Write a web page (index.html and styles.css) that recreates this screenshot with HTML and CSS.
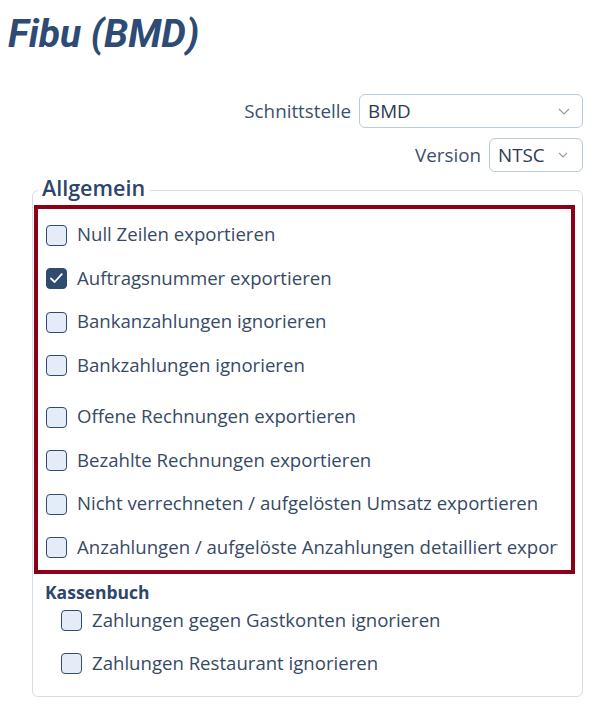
FILE: index.html
```html
<!DOCTYPE html>
<html lang="de">
<head>
<meta charset="utf-8">
<title>Fibu (BMD)</title>
<link rel="stylesheet" href="styles.css">
</head>
<body>
<div class="page">
  <h1 class="title">Fibu (BMD)</h1>

  <div class="settings">
    <div class="field-row">
      <label class="field-label">Schnittstelle</label>
      <div class="select select-wide">
        <span class="select-value">BMD</span>
        <svg class="chevron chevron-wide" viewBox="0 0 12 7" width="12" height="7"><path d="M1 1 L6 6 L11 1"/></svg>
      </div>
    </div>
    <div class="field-row">
      <label class="field-label">Version</label>
      <div class="select select-narrow">
        <span class="select-value">NTSC</span>
        <svg class="chevron chevron-narrow" viewBox="0 0 10 6" width="10" height="6"><path d="M1 1 L5 5 L9 1"/></svg>
      </div>
    </div>
  </div>

  <fieldset class="group">
    <legend class="group-title">Allgemein</legend>
    <div class="highlight">
      <div class="check-row"><span class="box"></span><span class="check-text">Null Zeilen exportieren</span></div>
      <div class="check-row"><span class="box checked"><svg viewBox="0 0 21 21" width="21" height="21"><path d="M5 10.5 L8.6 14 L15.8 6.2"/></svg></span><span class="check-text">Auftragsnummer exportieren</span></div>
      <div class="check-row"><span class="box"></span><span class="check-text">Bankanzahlungen ignorieren</span></div>
      <div class="check-row"><span class="box"></span><span class="check-text">Bankzahlungen ignorieren</span></div>
      <div class="check-row row-sep"><span class="box"></span><span class="check-text">Offene Rechnungen exportieren</span></div>
      <div class="check-row"><span class="box"></span><span class="check-text">Bezahlte Rechnungen exportieren</span></div>
      <div class="check-row"><span class="box"></span><span class="check-text">Nicht verrechneten / aufgelösten Umsatz exportieren</span></div>
      <div class="check-row"><span class="box"></span><span class="check-text">Anzahlungen / aufgelöste Anzahlungen detailliert exportieren</span></div>
    </div>
    <div class="subhead">Kassenbuch</div>
    <div class="sub-list">
      <div class="check-row sub-row"><span class="box"></span><span class="check-text">Zahlungen gegen Gastkonten ignorieren</span></div>
      <div class="check-row sub-row"><span class="box"></span><span class="check-text">Zahlungen Restaurant ignorieren</span></div>
    </div>
  </fieldset>
</div>
</body>
</html>
```

FILE: styles.css
```css
* {
  box-sizing: border-box;
}

body {
  margin: 0;
  background: #ffffff;
  font-family: "Open Sans", "Liberation Sans", sans-serif;
  font-size: 18.6px;
  color: #364a66;
}

.page {
  padding: 0 17px 0 8px;
}

.title {
  margin: 0;
  padding-top: 12px;
  font-family: Roboto, "Liberation Sans", sans-serif;
  font-style: italic;
  font-weight: 700;
  font-size: 39px;
  line-height: 44px;
  color: #2d4b74;
}

.settings {
  margin-top: 38px;
  display: flex;
  flex-direction: column;
  align-items: flex-end;
  gap: 10px;
}

.field-row {
  display: flex;
  align-items: center;
  gap: 8px;
}

.field-label {
  font-size: 18.8px;
  color: #3b4f6a;
}

.select {
  height: 34px;
  border: 1px solid #b8cae2;
  border-radius: 6px;
  background: #ffffff;
  display: flex;
  align-items: center;
  justify-content: space-between;
  padding-left: 8px;
}

.select-wide {
  width: 224px;
  padding-right: 12px;
}

.select-narrow {
  width: 94px;
  padding-right: 14px;
}

.select-value {
  font-size: 18.8px;
  color: #2b3b52;
}

.chevron path {
  fill: none;
  stroke: #8e9cb1;
  stroke-width: 1.2;
}

.group {
  margin: 3.5px 0 0 24px;
  padding: 0 0 11px 0;
  border: 1px solid #d5dde7;
  border-radius: 6px;
  min-width: 0;
}

.group-title {
  margin-left: 5px;
  padding: 0 5px 5px 4px;
  font-size: 21.5px;
  font-weight: 600;
  line-height: 24px;
  color: #2d4669;
}

.highlight {
  margin: 0 7px 0 1px;
  border: 4px solid #8b0016;
  padding: 4.75px 13px 0.25px 8px;
}

.check-row {
  height: 43.5px;
  display: flex;
  align-items: center;
  gap: 10px;
}

.row-sep {
  margin-top: 8px;
}

.box {
  flex-shrink: 0;
  width: 21px;
  height: 21px;
  border: 1.5px solid #2f4b6e;
  border-radius: 4px;
  background: #e3ecf7;
  display: flex;
  align-items: center;
  justify-content: center;
}

.box.checked {
  background: #2f4b6e;
}

.box.checked svg {
  margin: -1.5px;
  flex-shrink: 0;
}

.box.checked path {
  fill: none;
  stroke: #ffffff;
  stroke-width: 1.8;
  stroke-linecap: round;
  stroke-linejoin: round;
}

.check-text {
  flex: 1;
  min-width: 0;
  white-space: nowrap;
  overflow: hidden;
  line-height: 24px;
  padding-bottom: 2px;
}

.subhead {
  margin-top: 7px;
  padding-left: 12px;
  font-size: 17.5px;
  font-weight: 700;
  line-height: 22px;
  color: #2d4669;
}

.sub-list {
  margin-top: -3.5px;
  padding-left: 28px;
}

.sub-row {
  height: 43px;
}
```
